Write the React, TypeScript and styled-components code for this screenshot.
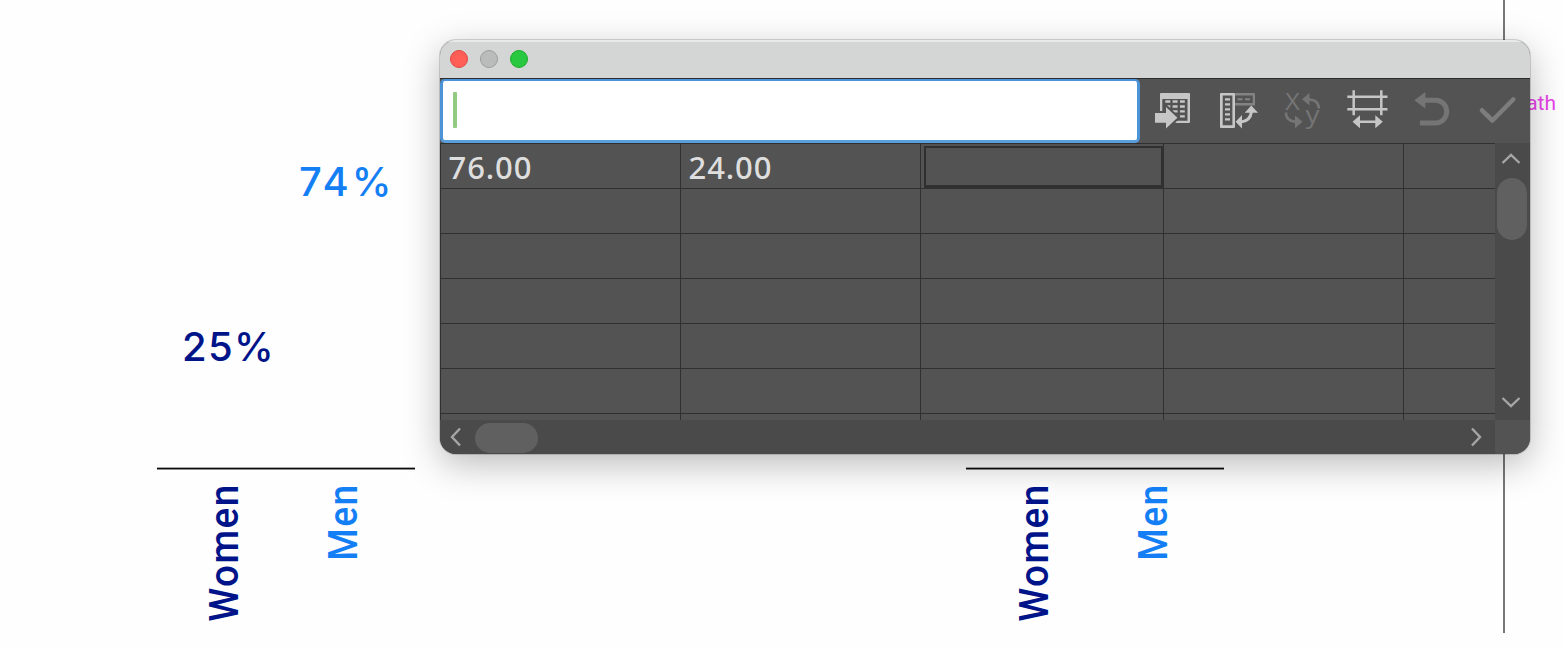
import styled, { createGlobalStyle } from "styled-components";

const GlobalStyle = createGlobalStyle`
    body {
        margin: 0;
        background: #fefefe;
        overflow: hidden;
    }
`

interface ChartLabelParams {
    x: number
    y: number
    color: string
}

interface PercentParams extends ChartLabelParams {
    $tracking: number
}

interface AxisLabelParams extends ChartLabelParams {
    $stretch: number
}

interface ColumnParams {
    width: number
}

const NAVY = '#00148a'
const BLUE = '#147ff5'

const columns = [240, 240, 243, 240, 92]
const rows = [
    ['76.00', '24.00', '', '', ''],
    ['', '', '', '', ''],
    ['', '', '', '', ''],
    ['', '', '', '', ''],
    ['', '', '', '', ''],
    ['', '', '', '', ''],
    ['', '', '', '', ''],
]

const ImportIcon = () => (
    <ToolIcon viewBox="0 0 65 64" fill="#c6c6c6">
        <path d="M21 14h28a1 1 0 0 1 1 1v28a1 1 0 0 1-1 1H20V15a1 1 0 0 1 1-1zM22.3 20v21.7h25.2V20z" fillRule="evenodd" />
        {[21.3, 26.3, 31.2, 36.2].map((y) => (
            <path key={y} d={`M25.3 ${y}h5v2.4h-5zM32.6 ${y}h5v2.4h-5zM40 ${y}h4.8v2.4H40z`} />
        ))}
        <path d="M14 32h10v-6l2-1L40 38.800 28.500 51H24v-5.500H14z" fill="#535353" />
        <path d="M15 34h11v-6l11.400 10.800L26 49.500V43.700H15z" />
    </ToolIcon>
)

const TransposeIcon = () => (
    <ToolIcon viewBox="0 0 65 64" fill="#c6c6c6">
        <path d="M30 14h19a1 1 0 0 1 1 1v11.500H30zM30 16.600v7.400h17.700v-7.400z" fill="#838383" fillRule="evenodd" />
        <path d="M32.500 19.300h5v2h-5zM40 19.300h5v2h-5z" fill="#838383" />
        <path d="M16 14h13a1 1 0 0 1 1 1v33a1 1 0 0 1-1 1H16a1 1 0 0 1-1-1V15a1 1 0 0 1 1-1zM17.700 16.600v29.700h9.700V16.600z" fillRule="evenodd" />
        {[19.2, 24.2, 29.2, 34.2, 39.2].map((y) => (
            <path key={y} d={`M20 ${y}h5v2.3h-5z`} />
        ))}
        <path d="M46.300 26.600L53 33.700H39.700zM30.600 42.800L37 36v13.500z" />
        <path d="M36 42.900C42 42.500 45.500 39.500 46.400 33" fill="none" stroke="#c6c6c6" strokeWidth="3" />
    </ToolIcon>
)

const SwitchXYIcon = () => (
    <ToolIcon viewBox="0 0 65 64" fill="#757575">
        <AxisLetter x="15.300" y="31" textLength="14.500" lengthAdjust="spacingAndGlyphs">X</AxisLetter>
        <AxisLetter x="35.500" y="43.500" textLength="14" lengthAdjust="spacingAndGlyphs">y</AxisLetter>
        <path d="M32 20.300L39.500 14v12.600zM32.500 42.800L25 36.500v12.700z" />
        <path d="M38.500 20.400C44.500 20.500 48.700 23 48.900 29.500M15.900 33.500C16 39 19.500 42.500 26 42.700" fill="none" stroke="#757575" strokeWidth="2.500" />
    </ToolIcon>
)

const CellStyleIcon = () => (
    <ToolIcon viewBox="0 0 65 64" fill="#c6c6c6">
        <path d="M12.300 17.700h40.200M12.300 30.300h40.200M18.700 11.300v25M46.300 11.300v25M23 42.700h19" fill="none" stroke="#c6c6c6" strokeWidth="2.500" />
        <path d="M17.500 42.700L25 36.300v12.900zM47.800 42.700L40.300 36.300v12.900z" />
    </ToolIcon>
)

const RevertIcon = () => (
    <ToolIcon viewBox="0 0 65 64" fill="#757575">
        <path d="M14.300 21.200L25.300 12.900v16.600z" />
        <path d="M24 21.200h11.500a11.200 11.400 0 0 1 0 22.800H20" fill="none" stroke="#757575" strokeWidth="5" />
    </ToolIcon>
)

const ApplyIcon = () => (
    <ToolIcon viewBox="0 0 65 64" fill="none" stroke="#7d7d7d" strokeWidth="4.600">
        <path d="M17 31.300l10.400 10.200 20.800-21" strokeLinecap="round" strokeLinejoin="round" />
    </ToolIcon>
)

const Chevron = ({ d }: { d: string }) => (
    <ChevronSvg viewBox="0 0 22 22">
        <path d={d} />
    </ChevronSvg>
)

const DataWindow = () => {
    return (
        <Window>
            <TitleBar>
                <TrafficLight color="#ff5f57" edge="#e2463f" />
                <TrafficLight color="#b9bcbb" edge="#9b9e9d" />
                <TrafficLight color="#28c840" edge="#1dad2b" />
            </TitleBar>
            <Toolbar>
                <EntryField>
                    <Caret />
                </EntryField>
                <Tools>
                    <ImportIcon />
                    <TransposeIcon />
                    <SwitchXYIcon />
                    <CellStyleIcon />
                    <RevertIcon />
                    <ApplyIcon />
                </Tools>
            </Toolbar>
            <Body>
                <Sheet>
                    {rows.map((row, r) => (
                        <SheetRow key={r}>
                            {row.map((value, c) => (
                                <Cell key={c} width={columns[c]}>
                                    {r === 0 && c === 2 ? <Selection /> : value}
                                </Cell>
                            ))}
                        </SheetRow>
                    ))}
                </Sheet>
                <VerticalScroll>
                    <Chevron d="M2.500 15L11 7l8.500 8" />
                    <VerticalThumb />
                    <Chevron d="M2.500 7L11 15l8.500-8" />
                </VerticalScroll>
            </Body>
            <Footer>
                <HorizontalScroll>
                    <Chevron d="M15 2.500L7 11l8 8.500" />
                    <HorizontalThumb />
                    <Chevron d="M7 2.500L15 11l-8 8.500" />
                </HorizontalScroll>
                <Corner />
            </Footer>
        </Window>
    )
}

const App = () => {
    return (
        <>
            <GlobalStyle />
            <Artboard>
                <ArtboardEdge />
                <PathHint><span>p</span>ath</PathHint>

                <Percent x={299} y={158} color={BLUE} $tracking={3}>74%</Percent>
                <Percent x={182} y={323} color={NAVY} $tracking={1.3}>25%</Percent>

                <Axis x={157} />
                <AxisLabel x={200} y={480} color={NAVY} $stretch={0.955}>Women</AxisLabel>
                <AxisLabel x={319} y={480} color={BLUE} $stretch={0.92}>Men</AxisLabel>

                <DataWindow />
                <Axis x={966} />
                <AxisLabel x={1010} y={480} color={NAVY} $stretch={0.955}>Women</AxisLabel>
                <AxisLabel x={1129} y={480} color={BLUE} $stretch={0.92}>Men</AxisLabel>
            </Artboard>
        </>
    )
}

const Artboard = styled.div`
    position: relative;
    width: 1564px;
    height: 648px;
    overflow: hidden;
    background: #fefefe;
`

const ArtboardEdge = styled.div`
    position: absolute;
    left: 1503px;
    top: 0;
    width: 2px;
    height: 633px;
    background: #77777a;
`

const PathHint = styled.span`
    position: absolute;
    right: 8px;
    top: 91px;
    font: 400 21px/24px Roboto, sans-serif;
    color: #ea44ea;
`

const Percent = styled.span<PercentParams>`
    position: absolute;
    left: ${({ x }) => x}px;
    top: ${({ y }) => y}px;
    font: 500 40px/48px Inter, sans-serif;
    letter-spacing: ${({ $tracking }) => $tracking}px;
    color: ${({ color }) => color};
`

const AxisLabel = styled.span<AxisLabelParams>`
    position: absolute;
    left: ${({ x }) => x}px;
    top: ${({ y }) => y}px;
    writing-mode: vertical-rl;
    transform: rotate(180deg) scaleY(${({ $stretch }) => $stretch});
    font: 500 40.5px/48px Roboto, sans-serif;
    letter-spacing: 1.5px;
    color: ${({ color }) => color};
`

const Axis = styled.div<{ x: number }>`
    position: absolute;
    left: ${({ x }) => x}px;
    top: 467px;
    width: 258px;
    height: 3px;
    background: linear-gradient(rgba(0, 0, 0, 0.35) 0 1px, #0c0c0c 1px 2px, rgba(0, 0, 0, 0.45) 2px);
`

const Window = styled.div`
    position: absolute;
    left: 440px;
    top: 40px;
    width: 1090px;
    height: 414px;
    display: flex;
    flex-direction: column;
    border-radius: 16px;
    overflow: hidden;
    background: #535353;
    box-shadow: 0 0 0 1px rgba(0, 0, 0, 0.15), 0 10px 36px rgba(0, 0, 0, 0.27);
`

const TitleBar = styled.div`
    height: 38px;
    box-sizing: border-box;
    display: flex;
    align-items: center;
    gap: 12px;
    padding-left: 10px;
    background: #d4d6d5;
    box-shadow: inset 0 2px 0 #e8eae9;
`

const TrafficLight = styled.span<{ color: string, edge: string }>`
    width: 18px;
    height: 18px;
    box-sizing: border-box;
    border: 1px solid ${({ edge }) => edge};
    border-radius: 50%;
    background: ${({ color }) => color};
`

const Toolbar = styled.div`
    height: 65px;
    box-sizing: border-box;
    display: flex;
    border-top: 1px solid #2c2c2c;
`

const EntryField = styled.div`
    width: 700px;
    box-sizing: border-box;
    display: flex;
    align-items: center;
    padding: 0 0 1px 10px;
    border: 3px solid #4c94d8;
    border-top-width: 2px;
    border-bottom-color: #5a9fdc;
    border-radius: 5px;
    background: #fff;
`

const Caret = styled.div`
    width: 4px;
    height: 36px;
    border-radius: 1px;
    background: #92ca82;
`

const Tools = styled.div`
    display: flex;
`

const ToolIcon = styled.svg`
    width: 65px;
    height: 64px;
`

const AxisLetter = styled.text`
    font: 400 23.5px "Open Sans", sans-serif;
`

const Body = styled.div`
    height: 277px;
    display: flex;
`

const Sheet = styled.div`
    width: 1055px;
    box-sizing: border-box;
    border-left: 1px solid #303030;
    overflow: hidden;
`

const SheetRow = styled.div`
    display: flex;
    height: 45px;
`

const Cell = styled.div<ColumnParams>`
    flex: none;
    width: ${({ width }) => width}px;
    box-sizing: border-box;
    display: flex;
    align-items: center;
    padding: 1px 0 0 7.5px;
    border-top: 1px solid #303030;
    border-right: 1px solid #303030;
    font: 500 31px/40px "Noto Sans", sans-serif;
    letter-spacing: 0.9px;
    color: #dedede;
`

const Selection = styled.div`
    flex: 1;
    align-self: stretch;
    margin: 1px 0 0 -5px;
    border: 2px solid #303030;
    border-bottom-width: 3px;
`

const VerticalScroll = styled.div`
    width: 35px;
    box-sizing: border-box;
    display: flex;
    flex-direction: column;
    align-items: center;
    padding: 5px 3px 7px 0;
    background: #4a4a4a;

    svg:last-child {
        margin-top: auto;
    }
`

const VerticalThumb = styled.div`
    width: 30px;
    height: 62px;
    margin: 8px 0 0 2px;
    border-radius: 15px;
    background: #606060;
`

const Footer = styled.div`
    flex: 1;
    display: flex;
`

const HorizontalScroll = styled.div`
    width: 1055px;
    box-sizing: border-box;
    display: flex;
    align-items: center;
    padding: 0 8px 0 5px;
    background: #4a4a4a;

    svg:last-child {
        margin-left: auto;
    }
`

const HorizontalThumb = styled.div`
    width: 63px;
    height: 30px;
    margin: 2px 0 0 8px;
    border-radius: 15px;
    background: #606060;
`

const Corner = styled.div`
    flex: 1;
    background: #535353;
`

const ChevronSvg = styled.svg`
    flex: none;
    width: 22px;
    height: 22px;
    fill: none;
    stroke: #a6a6a6;
    stroke-width: 2.4;
`

export default App;
